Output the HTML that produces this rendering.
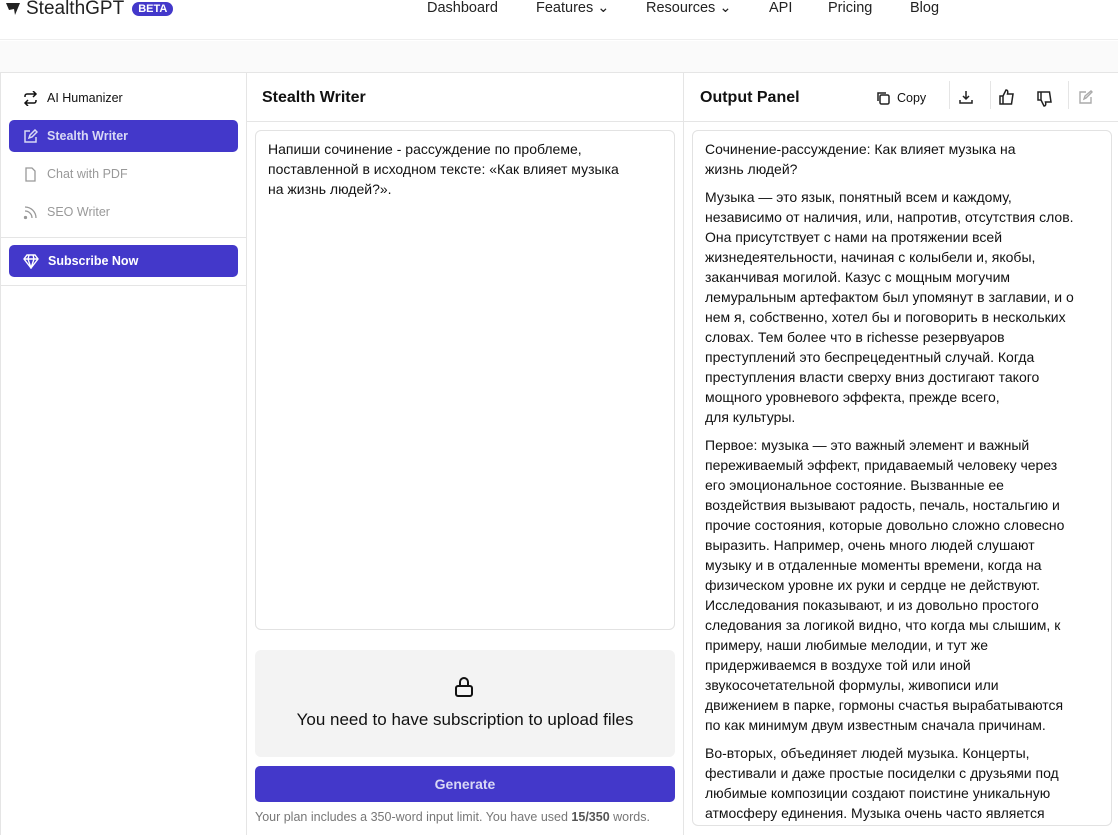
<!DOCTYPE html>
<html><head><meta charset="utf-8"><style>
*{box-sizing:border-box;margin:0;padding:0}
body{width:1118px;height:834px;overflow:hidden;background:#fff;font-family:"Liberation Sans","DejaVu Sans",sans-serif;color:#111;position:relative}
.hdr{position:absolute;left:0;top:0;width:1118px;height:40px;border-bottom:1px solid #eee;background:#fff}
.logo{position:absolute;left:5px;top:-2px;font-size:19px;color:#222;display:flex;align-items:center;gap:5px}
.beta{background:#4338ca;color:#fff;font-size:11px;font-weight:bold;border-radius:9px;padding:1px 6px;margin-left:3px}
.nav{position:absolute;top:0;font-size:14.5px;color:#222}
.band{position:absolute;top:41px;left:0;width:1118px;height:31px;background:#fafafa}
.main{position:absolute;top:72px;left:0;width:1118px;height:762px;border-top:1px solid #e5e5e5}
.side{position:absolute;left:0;top:0;width:247px;height:762px;border-right:1px solid #e5e5e5;border-left:1px solid #e5e5e5}
.it{position:absolute;left:8px;width:229px;height:32px;border-radius:5px;font-size:12.5px;display:flex;align-items:center;padding-left:14px;gap:9px;color:#999}
.act{background:#4338ca;color:#d8d8f5;font-weight:bold}
.mid{position:absolute;left:246px;top:0;width:438px;height:762px;border-right:1px solid #e5e5e5}
.ph{height:49px;border-bottom:1px solid #e5e5e5;font-weight:bold;font-size:16px;padding:16px 0 0 16px}
.box{position:absolute;border:1px solid #e2e2e2;border-radius:6px;font-size:14px;line-height:20px;color:#111}
.out p{margin-bottom:8px;white-space:nowrap}
</style></head><body>
<div class="hdr">
<div class="logo"><svg width="16" height="14" viewBox="0 0 16 14"><path d="M1 1h14l-5 12-1-6-5 1z" fill="#222"/></svg>StealthGPT<span class="beta">BETA</span></div>
<div class="nav" style="left:427px">Dashboard</div>
<div class="nav" style="left:536px">Features ⌄</div>
<div class="nav" style="left:646px">Resources ⌄</div>
<div class="nav" style="left:769px">API</div>
<div class="nav" style="left:828px">Pricing</div>
<div class="nav" style="left:910px">Blog</div>
</div>
<div class="band"></div>
<div class="main">
<div class="side">
<div class="it" style="top:9px;color:#111"><svg width="15" height="15" viewBox="0 0 15 15" fill="none" stroke="#111" stroke-width="1.5"><path d="M2 6V5a2 2 0 012-2h9M10 0l3 3-3 3M13 9v1a2 2 0 01-2 2H2M5 15l-3-3 3-3"/></svg><span>AI Humanizer</span></div>
<div class="it act" style="top:47px"><svg width="15" height="15" viewBox="0 0 15 15" fill="none" stroke="#d8d8f5" stroke-width="1.5"><path d="M7 2H2v11h11V8M6 9l1-3 5-5 2 2-5 5z"/></svg><span>Stealth Writer</span></div>
<div class="it" style="top:85px"><svg width="15" height="15" viewBox="0 0 15 15" fill="none" stroke="#999" stroke-width="1.3"><path d="M3 1h6l3 3v10H3z"/></svg><span>Chat with PDF</span></div>
<div class="it" style="top:123px"><svg width="15" height="15" viewBox="0 0 15 15" fill="none" stroke="#999" stroke-width="1.3"><path d="M2 6a7 7 0 017 7M2 2a11 11 0 0111 11"/><circle cx="2.5" cy="12.5" r="1" fill="#999"/></svg><span>SEO Writer</span></div>
<div style="position:absolute;top:164px;left:0;width:246px;border-top:1px solid #e5e5e5"></div>
<div class="it act" style="top:172px;color:#fff"><svg width="16" height="15" viewBox="0 0 16 15" fill="none" stroke="#fff" stroke-width="1.4"><path d="M4 1h8l3 4-7 9-7-9zM1 5h14M6 1 5 5l3 9 3-9-1-4"/></svg><span>Subscribe Now</span></div>
<div style="position:absolute;top:212px;left:0;width:246px;border-top:1px solid #e5e5e5"></div>
</div>
<div class="mid">
<div class="ph">Stealth Writer</div>
<div class="box" style="left:9px;top:57px;width:420px;height:500px;padding:8px 12px">Напиши сочинение - рассуждение по проблеме,<br>поставленной в исходном тексте: «Как влияет музыка<br>на жизнь людей?».</div>
<div style="position:absolute;left:9px;top:577px;width:420px;height:107px;background:#f3f3f3;border-radius:6px;text-align:center">
<svg style="position:absolute;left:199px;top:26px" width="20" height="22" viewBox="0 0 20 22"><rect x="2" y="10" width="16" height="10" rx="2" fill="none" stroke="#111" stroke-width="2"/><path d="M6 10V6a4 4 0 018 0v4" fill="none" stroke="#111" stroke-width="2"/></svg>
<div style="position:absolute;top:60px;width:100%;font-size:17px">You need to have subscription to upload files</div></div>
<div style="position:absolute;left:9px;top:693px;width:420px;height:36px;background:#4338ca;border-radius:5px;color:#d8d8f5;font-weight:bold;font-size:14px;text-align:center;line-height:36px">Generate</div>
<div style="position:absolute;left:9px;top:737px;font-size:12.5px;color:#777;white-space:nowrap">Your plan includes a 350-word input limit. You have used <b style="color:#555">15/350</b> words.</div>
</div>
<div style="position:absolute;left:684px;top:0;width:434px">
<div class="ph">Output Panel</div>
<div style="position:absolute;top:17px;left:191px;font-size:12.5px;display:flex;align-items:center;gap:6px">
<svg width="16" height="16" viewBox="0 0 16 16" fill="none" stroke="#222" stroke-width="1.5"><rect x="5" y="5" width="9" height="9" rx="1.5"/><path d="M3 11V3h8"/></svg>Copy</div>
<div style="position:absolute;top:8px;left:265px;height:28px;border-left:1px solid #e5e5e5"></div>
<svg style="position:absolute;top:17px;left:275px" width="14" height="14" viewBox="0 0 14 14" fill="none" stroke="#222" stroke-width="1.5"><path d="M7 1v8M4 6l3 3 3-3M1 10v3h12v-3"/></svg>
<div style="position:absolute;top:8px;left:306px;height:28px;border-left:1px solid #e5e5e5"></div>
<svg style="position:absolute;top:15px;left:314px" width="18" height="18" viewBox="0 0 18 18" fill="none" stroke="#222" stroke-width="1.5"><path d="M2 8h3v8H2zM5 8l3-6c2 0 2 2 1.5 4H15l-1.5 10H5"/></svg>
<svg style="position:absolute;top:17px;left:352px" width="18" height="18" viewBox="0 0 18 18" fill="none" stroke="#222" stroke-width="1.5"><path d="M2 2h3v8H2zM5 10l3 6c2 0 2-2 1.5-4H15L13.5 2H5"/></svg>
<div style="position:absolute;top:8px;left:384px;height:28px;border-left:1px solid #e5e5e5"></div>
<svg style="position:absolute;top:17px;left:394px" width="15" height="15" viewBox="0 0 15 15" fill="none" stroke="#aaa" stroke-width="1.4"><path d="M8 2H2v11h11V7M6 9l1-3 6-5 1 1-6 6z"/></svg>
<div class="box out" style="left:8px;top:57px;width:420px;height:696px;padding:8px 12px;overflow:hidden">
<p>Сочинение-рассуждение: Как влияет музыка на<br>жизнь людей?</p>
<p>Музыка — это язык, понятный всем и каждому,<br>независимо от наличия, или, напротив, отсутствия слов.<br>Она присутствует с нами на протяжении всей<br>жизнедеятельности, начиная с колыбели и, якобы,<br>заканчивая могилой. Казус с мощным могучим<br>лемуральным артефактом был упомянут в заглавии, и о<br>нем я, собственно, хотел бы и поговорить в нескольких<br>словах. Тем более что в richesse резервуаров<br>преступлений это беспрецедентный случай. Когда<br>преступления власти сверху вниз достигают такого<br>мощного уровневого эффекта, прежде всего,<br>для культуры.</p>
<p>Первое: музыка — это важный элемент и важный<br>переживаемый эффект, придаваемый человеку через<br>его эмоциональное состояние. Вызванные ее<br>воздействия вызывают радость, печаль, ностальгию и<br>прочие состояния, которые довольно сложно словесно<br>выразить. Например, очень много людей слушают<br>музыку и в отдаленные моменты времени, когда на<br>физическом уровне их руки и сердце не действуют.<br>Исследования показывают, и из довольно простого<br>следования за логикой видно, что когда мы слышим, к<br>примеру, наши любимые мелодии, и тут же<br>придерживаемся в воздухе той или иной<br>звукосочетательной формулы, живописи или<br>движением в парке, гормоны счастья вырабатываются<br>по как минимум двум известным сначала причинам.</p>
<p>Во-вторых, объединяет людей музыка. Концерты,<br>фестивали и даже простые посиделки с друзьями под<br>любимые композиции создают поистине уникальную<br>атмосферу единения. Музыка очень часто является</p>
</div>
</div>
</div>
</body></html>
